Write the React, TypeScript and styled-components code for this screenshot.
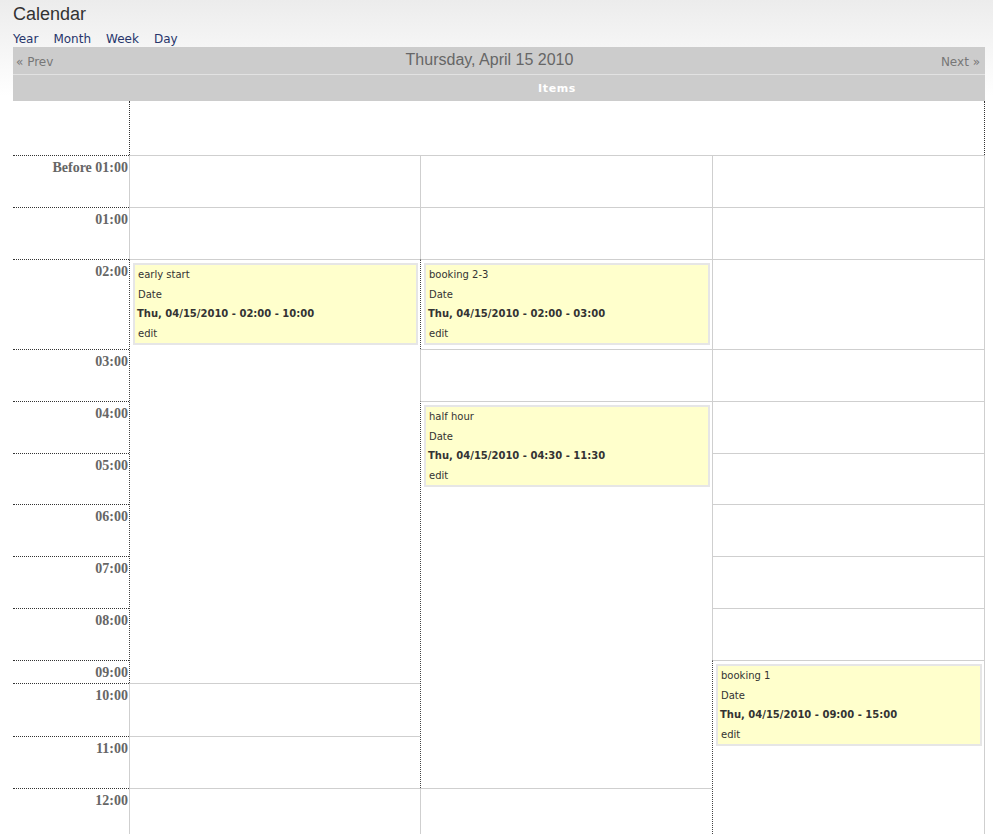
import React from 'react';
import styled, { createGlobalStyle } from 'styled-components';

const GlobalStyle = createGlobalStyle`
  html, body {
    margin: 0;
    padding: 0;
  }
  body {
    background: #fff linear-gradient(to bottom, #ececec 0, #ffffff 96px) no-repeat;
    font-family: 'DejaVu Sans', Verdana, sans-serif;
    color: #333;
  }
`;

const Page = styled.div`
  padding: 0 8px 0 13px;
`;

const Title = styled.h1`
  margin: 0;
  padding-top: 3px;
  font-family: 'Liberation Sans', Arial, sans-serif;
  font-size: 18px;
  font-weight: normal;
  line-height: 22px;
  color: #333;
`;

const Tabs = styled.nav`
  display: flex;
  gap: 15px;
  margin-top: 7px;
  height: 15px;
  font-size: 12px;
  line-height: 14px;
`;

const Tab = styled.a`
  color: #27356b;
  text-decoration: none;
  cursor: pointer;
`;

const NavBar = styled.div`
  display: grid;
  grid-template-columns: 180px 1fr 199px;
  align-items: center;
  height: 27px;
  background: #cccccc;
`;

const NavLink = styled.a<{ $right?: boolean }>`
  font-size: 12px;
  color: #777;
  text-decoration: none;
  padding: ${({ $right }) => ($right ? '2px 5px 0 0' : '2px 0 0 3px')};
  text-align: ${({ $right }) => ($right ? 'right' : 'left')};
`;

const DateTitle = styled.h3`
  margin: 0 0 2px;
  text-align: center;
  font-family: 'Liberation Sans', Arial, sans-serif;
  font-size: 16px;
  font-weight: normal;
  color: #666;
`;

const ItemsBar = styled.div`
  display: grid;
  grid-template-columns: 116px 1fr;
  align-items: center;
  height: 26px;
  border-top: 1px solid #e2e2e2;
  background: #cccccc;
`;

const ItemsTitle = styled.div`
  text-align: center;
  font-size: 11px;
  font-weight: bold;
  letter-spacing: 0.6px;
  color: #fff;
`;

const AllDayRow = styled.div`
  display: grid;
  grid-template-columns: 116px 1fr;
  height: 54px;
  background: #fff;
`;

const AllDayCell = styled.div`
  border-left: 1px dotted #333;
  border-right: 1px dotted #333;
`;

const HoursGrid = styled.div`
  display: grid;
  grid-template-columns: 116px 291px 292px 273px;
  background: #fff;
`;

const Column = styled.div`
  display: flex;
  flex-direction: column;
`;

const TimeLabel = styled.div<{ $h: number }>`
  box-sizing: border-box;
  height: ${({ $h }) => $h}px;
  border-top: 1px dotted #333;
  padding: 4px 1px 0 0;
  text-align: right;
  font-family: 'Liberation Serif', 'Times New Roman', serif;
  font-size: 14px;
  font-weight: bold;
  line-height: 16px;
  color: #666;
  overflow: hidden;
`;

const Slot = styled.div<{ $h: number; $event?: boolean; $last?: boolean }>`
  box-sizing: border-box;
  height: ${({ $h }) => $h}px;
  border-top: 1px solid #cfcfcf;
  border-left: 1px ${({ $event }) => ($event ? 'dotted #444' : 'solid #cfcfcf')};
  border-right: ${({ $last }) => ($last ? '1px solid #cfcfcf' : '0')};
  padding: 3px 2px 0 3px;
`;

const EventBox = styled.div`
  background: #ffffcc;
  border: 2px solid #e6e6e6;
  font-size: 10px;
  color: #333;
`;

const EventLine = styled.div<{ $bold?: boolean }>`
  line-height: 19.5px;
  padding-left: ${({ $bold }) => ($bold ? '2px' : '3px')};
  font-weight: ${({ $bold }) => ($bold ? 'bold' : 'normal')};
  white-space: nowrap;
`;

type Booking = { title: string; when: string };
type Cell = { h: number; booking?: Booking };

const labels: [string, number][] = [
  ['Before 01:00', 52],
  ['01:00', 52],
  ['02:00', 90],
  ['03:00', 52],
  ['04:00', 52],
  ['05:00', 51],
  ['06:00', 52],
  ['07:00', 52],
  ['08:00', 52],
  ['09:00', 23],
  ['10:00', 53],
  ['11:00', 52],
  ['12:00', 46],
];

const columns: Cell[][] = [
  [
    { h: 52 },
    { h: 52 },
    { h: 424, booking: { title: 'early start', when: 'Thu, 04/15/2010 - 02:00 - 10:00' } },
    { h: 53 },
    { h: 52 },
    { h: 46 },
  ],
  [
    { h: 52 },
    { h: 52 },
    { h: 90, booking: { title: 'booking 2-3', when: 'Thu, 04/15/2010 - 02:00 - 03:00' } },
    { h: 52 },
    { h: 387, booking: { title: 'half hour', when: 'Thu, 04/15/2010 - 04:30 - 11:30' } },
    { h: 46 },
  ],
  [
    { h: 52 },
    { h: 52 },
    { h: 90 },
    { h: 52 },
    { h: 52 },
    { h: 51 },
    { h: 52 },
    { h: 52 },
    { h: 52 },
    { h: 174, booking: { title: 'booking 1', when: 'Thu, 04/15/2010 - 09:00 - 15:00' } },
  ],
];

const App: React.FC = () => {
  return (
    <Page>
      <GlobalStyle />
      <Title>Calendar</Title>
      <Tabs>
        <Tab>Year</Tab>
        <Tab>Month</Tab>
        <Tab>Week</Tab>
        <Tab>Day</Tab>
      </Tabs>
      <NavBar>
        <NavLink>« Prev</NavLink>
        <DateTitle>Thursday, April 15 2010</DateTitle>
        <NavLink $right>Next »</NavLink>
      </NavBar>
      <ItemsBar>
        <div />
        <ItemsTitle>Items</ItemsTitle>
      </ItemsBar>
      <AllDayRow>
        <div />
        <AllDayCell />
      </AllDayRow>
      <HoursGrid>
        <Column>
          {labels.map(([text, h]) => (
            <TimeLabel key={text} $h={h}>
              {text}
            </TimeLabel>
          ))}
        </Column>
        {columns.map((cells, ci) => (
          <Column key={ci}>
            {cells.map((cell, i) => (
              <Slot key={i} $h={cell.h} $event={!!cell.booking} $last={ci === columns.length - 1}>
                {cell.booking && (
                  <EventBox>
                    <EventLine>{cell.booking.title}</EventLine>
                    <EventLine>Date</EventLine>
                    <EventLine $bold>{cell.booking.when}</EventLine>
                    <EventLine>edit</EventLine>
                  </EventBox>
                )}
              </Slot>
            ))}
          </Column>
        ))}
      </HoursGrid>
    </Page>
  );
};

export default App;
